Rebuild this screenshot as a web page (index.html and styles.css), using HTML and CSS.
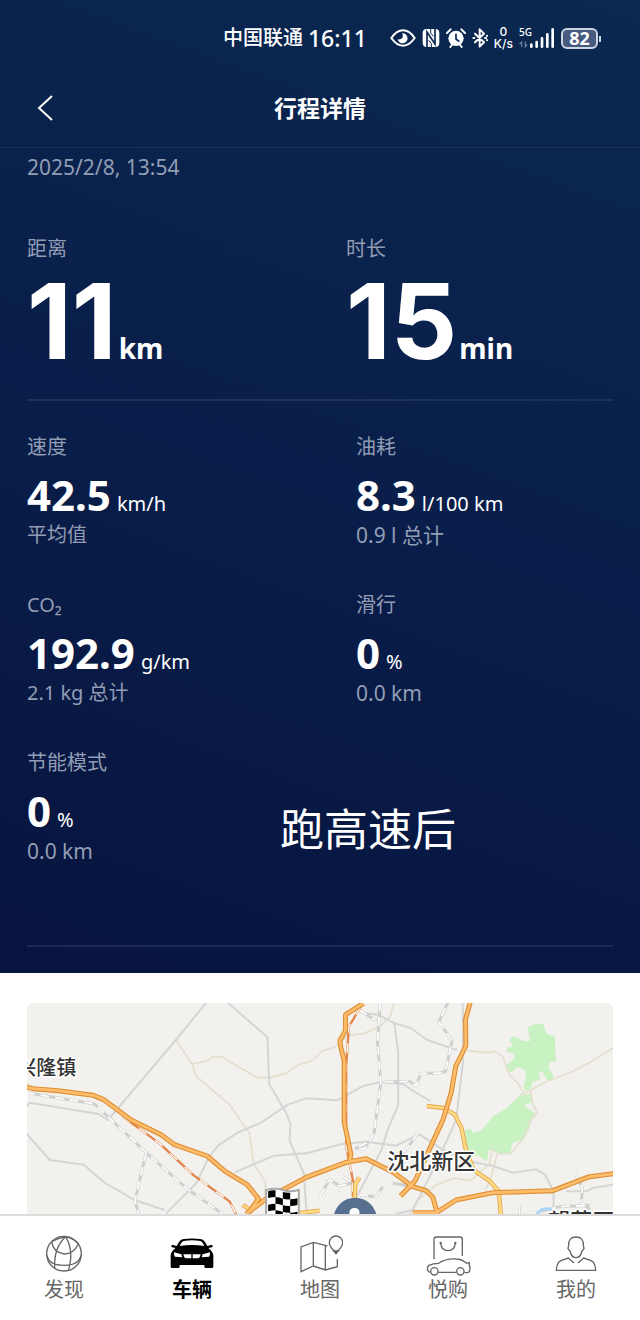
FILE: index.html
```html
<!DOCTYPE html>
<html lang="zh-CN">

<head>
    <meta charset="UTF-8">
    <meta name="viewport" content="width=device-width, initial-scale=1.0">
    <title>行程详情</title>
    <link rel="stylesheet" href="styles.css">
</head>

<body>
    <div class="hero">
        <div class="status-bar">
            <span class="carrier">中国联通</span>
            <span class="clock">16:11</span>
            <div class="status-icons">
                <svg width="26" height="20" viewBox="0 0 78 60" fill="none" stroke="#fff" stroke-width="6">
                    <path d="M4 30Q20 7 39 7T74 30Q58 53 39 53T4 30Z" />
                    <path d="M36 16a15 15 0 1 1-13 18q12 2 15-6 2-7-2-12z" fill="#fff" stroke="none" />
                </svg>
                <svg width="18" height="20" viewBox="0 0 54 60">
                    <rect x="2" y="3" width="50" height="54" rx="12" fill="#fff" />
                    <path d="M15 57V12l24 36V3" fill="none" stroke="#0a2650" stroke-width="5" />
                    <path d="M26 3v12l8 10M28 57V47l-8-10" fill="none" stroke="#0a2650" stroke-width="3" />
                </svg>
                <svg width="20" height="20" viewBox="0 0 60 60">
                    <circle cx="30" cy="31" r="23" fill="#fff" />
                    <path d="M3 15L14 4M57 15L46 4M13 57l7-9M47 57l-7-9" stroke="#fff" stroke-width="6" stroke-linecap="round" />
                    <path d="M30 17v16l10 8" fill="none" stroke="#0a2650" stroke-width="5" />
                </svg>
                <svg width="16" height="20" viewBox="0 0 48 60" fill="none" stroke="#fff" stroke-width="6" stroke-linecap="round" stroke-linejoin="round">
                    <path d="M9 17l27 26-13 13V4l13 13L9 43" />
                    <path d="M4 30h3M39 30h3M45 23v1M45 36v1" />
                </svg>
                <div class="net-speed"><span>0</span><span>K/s</span></div>
                <div class="signal">
                    <span>5G</span>
                    <svg width="36" height="22" viewBox="0 0 108 66" fill="none" stroke="#fff" stroke-width="8" stroke-linecap="round">
                        <path d="M37 59v-6M53 59V45M69 59V34M85 59V22M101 59V7" />
                        <path d="M8 59V45l-5 5M19 45v14l5-5" stroke-width="4" opacity=".4" />
                    </svg>
                </div>
                <div class="battery">82</div>
            </div>
        </div>

        <header class="title-bar">
            <button class="back" aria-label="返回">
                <svg width="18" height="28" viewBox="0 0 18 28" fill="none" stroke="#fff" stroke-width="2">
                    <path d="M16 2L3 14l13 12" />
                </svg>
            </button>
            <h1>行程详情</h1>
        </header>

        <main class="trip">
            <p class="date">2025/2/8, 13:54</p>

            <section class="summary">
                <div>
                    <p class="label">距离</p>
                    <p class="big">11<span>km</span></p>
                </div>
                <div>
                    <p class="label">时长</p>
                    <p class="big">15<span>min</span></p>
                </div>
            </section>

            <section class="stats">
                <div>
                    <p class="label">速度</p>
                    <p class="value">42.5<span>km/h</span></p>
                    <p class="label">平均值</p>
                </div>
                <div>
                    <p class="label">油耗</p>
                    <p class="value">8.3<span>l/100 km</span></p>
                    <p class="total">0.9 l 总计</p>
                </div>
                <div>
                    <p class="label">CO₂</p>
                    <p class="value">192.9<span>g/km</span></p>
                    <p class="label">2.1 kg 总计</p>
                </div>
                <div>
                    <p class="label">滑行</p>
                    <p class="value">0<span>%</span></p>
                    <p class="total">0.0 km</p>
                </div>
                <div>
                    <p class="label">节能模式</p>
                    <p class="value">0<span>%</span></p>
                    <p class="total">0.0 km</p>
                </div>
                <p class="note">跑高速后</p>
            </section>
        </main>
    </div>

    <section class="map-area">
        <svg class="map" viewBox="81 39 1761 633" preserveAspectRatio="xMidYMin slice" fill="none" stroke-linejoin="round">
            <!-- parks -->
            <g transform="translate(930 0)" fill="#c9f2c2">
                <path d="M655 112l24-11 22 2 10 28 26 8v45l3 30-18 3-6 15 17 28-6 12-15-2-14-26-9 2 2 24-22 6-7 22-14 4-6-11 8-32-4-19-22-10-16 16-17-2 2-20 22-20-2-14-21-4 1-13 18-3-10-19 7-12 19 5 15 9h20z" />
                <path d="M466 420l18-4 6 12 24-6 38-44 42-26 38-36 30-5 7 12-2 14-24 8 36 28-12 12-8 32-18 32-32 10-7 31-30 2-34-12-6 34-28-18-22 6-18-40z" />
            </g>
            <!-- minor roads -->
            <g stroke="#e3dfcf" stroke-width="5">
                <path d="M529 150l50 74 10 34 101 86 60 86 12 90 36 56-2 40M579 222l43-9 18-13 27 0 50 30 56 33h40l45-13 40-26 40-12 32-30 34-10 40-34 50-8 46-20 32-30 10-40" />
                <path d="M1404 182l56 6 27-4 23 16 20 54 24 24 25 42M1561 315l34-14 40-24 80-30 60-32 70-44M1592 300l8 42 14 26-22 26-20 50-38 46-32 2-24-16-8 44-56 52-50-8-56 22-54 44-30 56-40 20M1494 490l-22 80-16 34" />
            </g>
            <!-- country roads -->
            <g stroke="#d5d5d5" stroke-width="6">
                <path d="M620 38L529 150 325 390l-28-18-206-34-12 14M80 430l71 80 102 14 62 54 90 52 90 30M685 38l119 104 5 140 50 85 14 35-3 50 43 98 8 118M500 670l90-90 38-78 28-35 60-40 70-30 80-54 55-18 92 6 80-44 50-10 70 6 28 20 52 30" />
                <path d="M705 547l119-50 100-8 100-26 76-8 90 12 70-34 70 46 60 26M1100 70l36 4 49 26 48 14 50 36 90 30M1184 96l12 90v160l-32 74-18 60-80 150M1390 40v180l-20 170-60 130-70 140-50 12M1420 516l60 12 60 20 70-10 26 15 26 50v54M1700 604h60l20-10 62-10" />
            </g>
            <!-- railways -->
            <g stroke="#cfcfcf" stroke-width="9">
                <path d="M80 308l205 34 155 146 120 106 120 86M440 488l-34 145 12 40M1142 38l-8 120 10 120-20 150-30 50-24-4 40-20M1080 60l50 32M1156 276l74-2 20 14 14-38h50l24-6 20-92-40-56 28-60M1255 430l-50 70M962 618l28-50 30 20 40-10M1030 560l30 20M1080 614l50 6 20-30M1180 580l50 8M1725 545l24 50-4 44 28 20M1560 645v26M1600 670l80-20 90-4" />
            </g>
            <g stroke="#fff" stroke-width="5" stroke-dasharray="26 18">
                <path d="M80 308l205 34 155 146 120 106 120 86M440 488l-34 145 12 40M1142 38l-8 120 10 120-20 150-30 50-24-4 40-20M1080 60l50 32M1156 276l74-2 20 14 14-38h50l24-6 20-92-40-56 28-60M1255 430l-50 70M962 618l28-50 30 20 40-10M1030 560l30 20M1080 614l50 6 20-30M1725 545l24 50-4 44 28 20M1560 645v26M1600 670l80-20 90-4" />
            </g>
            <g stroke="#e3854a" stroke-width="7">
                <path d="M370 380l110 80 100 94 110 80 20 40M1084 50l-36 60-8 120v240l20 100v50" />
            </g>
            <g stroke="#fff" stroke-width="4" stroke-dasharray="28 32">
                <path d="M370 380l110 80 100 94 110 80 20 40M1084 50l-36 60-8 120v240l20 100v50" />
            </g>
            <!-- highways -->
            <g stroke="#e6a04a" stroke-width="13">
                <path d="M1282 348l50 6 34 20 20 40 12 60 24 66 50 34 26 30 6 70M1080 562l-12 20-4 58M730 645l30 20M890 670l70-8" />
            </g>
            <g stroke="#ffdc82" stroke-width="8">
                <path d="M1282 348l50 6 34 20 20 40 12 60 24 66 50 34 26 30 6 70M1080 562l-12 20-4 58M730 645l30 20M890 670l70-8" />
            </g>
            <g stroke="#de8f35" stroke-width="15">
                <path d="M78 290l22 6 76 6 105 14 30 12 84 62 90 44 40 30 98 34 54 46 66 40 34 42-27 38M740 672l60-46 120-64 120-45 60-11 80 40 60 44 40 12 20 20 14 50M1092 40l-54 34v48l-17 30 3 20 10 40v184l20 96-4 26M1412 38l-14 50 1 80-30 60-14 80-24 80-34 74-50 110-44 46M1240 668h70l60-38 110-22 180-6 110-42 82-10" />
            </g>
            <g stroke="#ffbd6b" stroke-width="8">
                <path d="M78 290l22 6 76 6 105 14 30 12 84 62 90 44 40 30 98 34 54 46 66 40 34 42-27 38M740 672l60-46 120-64 120-45 60-11 80 40 60 44 40 12 20 20 14 50M1092 40l-54 34v48l-17 30 3 20 10 40v184l20 96-4 26M1412 38l-14 50 1 80-30 60-14 80-24 80-34 74-50 110-44 46M1240 668h70l60-38 110-22 180-6 110-42 82-10" />
            </g>
            <path d="M1612 672l16-14 24-2 12 14M1690 664l30 2" stroke="#a9d6f5" stroke-width="9" />
            <g class="places">
                <text x="50" y="254">兴隆镇</text>
                <text class="district" x="1163" y="536">沈北新区</text>
                <text class="district" x="1646" y="717">望花区</text>
            </g>
            <!-- finish flag -->
            <path d="M800 680v-80q30-8 50 0t48 0v80z" fill="#fff" stroke="#aaa" stroke-width="6" />
            <path d="M806 604q11-4 22-3v20q-11 0-22 3zM850 606q11 3 22 2v20q-11 1-22-2zM828 621q11 0 22 5v20q-11-5-22-5zM872 628q11 0 22-3v20q-11 3-22 3zM806 644q11-3 22-3v20q-11 0-22 3zM850 646q11 3 22 2v20q-11 1-22-2zM828 661q11 0 22 5v14h-22zM872 668q11 0 22-3v16h-22z" fill="#000" />
            <!-- start pin -->
            <circle cx="1067" cy="688" r="65" fill="#587090" />
            <path d="M1050 680v-12q0-14 15-14t15 14v12z" fill="#fff" />
        </svg>
    </section>

    <nav class="tabs">
        <a href="#">
            <svg width="38" height="42" viewBox="0 0 114 126" fill="none" stroke="#666" stroke-width="4">
                <circle cx="57" cy="59" r="52" />
                <path d="M62 8Q26 40 29 102M62 8q26 44 8 102M20 23q4 32 38 37 28 0 42-30M62 8Q40 12 20 23M62 8q26 6 38 22M6 64q6 30 51 30 44 0 51-30" />
            </svg>
            发现
        </a>
        <a href="#" class="active">
            <svg width="46" height="42" viewBox="0 0 138 126">
                <path d="M23 36q9-18 17-20 29-5 58 0 8 2 17 20l14-4q5 5 0 8l-11 2q13 10 15 21v36q-1 3-4 3h-19q-4 0-4-4v-5H32v5q0 4-4 4H9q-4 0-4-3V63q2-12 15-21L9 40q-5-3 0-8zm9 0q37-6 74 0-6-14-12-15-25-4-50 0-6 1-12 15z" />
                <path d="M15 55l22 6 3 9-22-2q-4-5-3-13zM123 55l-22 6-3 9 22-2q4-5 3-13zM43 61h24v12H50q-6-2-7-12zM95 61H71v12h17q6-2 7-12z" fill="#fff" />
            </svg>
            车辆
        </a>
        <a href="#">
            <svg width="46" height="42" viewBox="0 0 138 126" fill="none" stroke="#666" stroke-width="4">
                <path d="M121 75v23l-36 10-36-12-37 17V39l37-14 36 9 6 2M49 25v71M85 34v74M117 58c-8-12-20-18-20-32a20 20 0 0 1 40 0c0 14-12 20-20 32z" />
                <path d="M104 46q13 6 26 0l-13 16z" fill="#666" stroke="none" />
            </svg>
            地图
        </a>
        <a href="#">
            <svg width="46" height="42" viewBox="0 0 138 126" fill="none" stroke="#666" stroke-width="4">
                <path d="M27 76V16q0-7 7-7h71q7 0 7 7v50M47 27q2 23 22 23t22-23M17 115q-7 0-9-6-2-6 2-14 14-7 31-7 20-15 53-13 15 0 31 13l8-2v8q4 8 0 19-4 4-15 2M40 115h54" />
                <circle cx="28" cy="112" r="11" />
                <circle cx="106" cy="112" r="11" />
                <path d="M44 27h6M88 27h6" stroke-width="8" />
            </svg>
            悦购
        </a>
        <a href="#">
            <svg width="42" height="42" viewBox="0 0 126 126" fill="none" stroke="#666" stroke-width="4">
                <path d="M63 9q23 0 22 25l2 10-6 7q-4 20-18 20T45 51l-6-7 2-10Q40 9 63 9zM57 87L40 72 18 80Q5 85 4 109h118q-1-24-14-29l-22-8-17 15" />
            </svg>
            我的
        </a>
    </nav>
</body>

</html>
```
FILE: styles.css
```css
* {
    box-sizing: border-box;
}

body {
    margin: 0;
    min-height: 100vh;
    display: flex;
    flex-direction: column;
    background-color: #fff;
    font-family: "Noto Sans", "Noto Sans CJK SC", sans-serif;
    font-size: 20px;
    line-height: 28px;
}

p,
h1 {
    margin: 0;
}

.hero {
    color: #fff;
    background: linear-gradient(200deg, #0a2850, #091e4a 50%, #07143f);
}

/* phone status bar */
.status-bar {
    display: flex;
    justify-content: flex-end;
    align-items: center;
    height: 76px;
    padding-right: 42px;
    font-weight: 500;
}

.clock {
    margin: 0 23px 0 5px;
    font-size: 23px;
}

.status-icons {
    display: flex;
    align-items: center;
    gap: 6px;
}

.net-speed {
    display: flex;
    flex-direction: column;
    align-items: center;
    font-family: Inter, sans-serif;
    font-size: 12px;
    line-height: 12px;
}

.signal {
    position: relative;
    display: flex;
}

.signal span {
    position: absolute;
    left: 0;
    top: 0;
    font-size: 10px;
    line-height: 10px;
}

.battery {
    position: relative;
    width: 37px;
    height: 21px;
    border: 2px solid #cdd5e0;
    border-radius: 6px;
    background-color: #475a80;
    font-size: 18px;
    font-weight: 700;
    line-height: 17px;
    text-align: center;
}

.battery::after {
    content: "";
    position: absolute;
    right: -5px;
    top: 6px;
    width: 2px;
    height: 6px;
    background-color: #cdd5e0;
}

.title-bar {
    display: grid;
    grid-template-columns: 90px 1fr 90px;
    align-items: center;
    height: 72px;
    padding-bottom: 8px;
    border-bottom: 1px solid #1b315a;
}

.title-bar h1 {
    font-size: 23px;
    font-weight: 700;
    text-align: center;
}

.back {
    display: flex;
    justify-content: center;
    padding: 0;
    border: none;
    background: none;
    cursor: pointer;
}

/* trip figures */
.trip {
    padding: 5px 27px 26px;
}

.date,
.label,
.total {
    color: #929db4;
}

.date,
.total {
    font-size: 21px;
}

.summary {
    display: grid;
    grid-template-columns: 1fr 1fr;
    column-gap: 52px;
    margin-top: 54px;
    padding-bottom: 26px;
    border-bottom: 2px solid #1e3059;
}

.big {
    display: flex;
    align-items: baseline;
    gap: 2px;
    margin-top: 6px;
    font-family: Inter, sans-serif;
    font-size: 104px;
    font-weight: 700;
    line-height: 104px;
}

.big span {
    font-family: "Noto Sans", sans-serif;
    font-size: 28px;
    line-height: 28px;
}

.stats {
    position: relative;
    display: grid;
    grid-template-columns: 1fr 1fr;
    gap: 42px 72px;
    padding: 32px 0 80px;
    border-bottom: 2px solid #1c2a54;
}

.value {
    display: flex;
    align-items: baseline;
    gap: 6px;
    margin-top: 8px;
    font-size: 42px;
    font-weight: 700;
    line-height: 52px;
}

.value span {
    font-size: 20px;
    font-weight: 400;
    line-height: 28px;
}

/* caption written over the figures */
.note {
    position: absolute;
    left: 253px;
    bottom: 84px;
    font-size: 44px;
    line-height: 64px;
}

.map-area {
    flex: 1;
    padding: 30px 27px 0;
}

.map {
    display: block;
    width: 100%;
    height: 211px;
    border-radius: 6px 6px 0 0;
    background-color: #f2f1ed;
}

.places text {
    fill: #333;
    stroke: #fff;
    stroke-width: 9px;
    paint-order: stroke;
    font-size: 60px;
    font-weight: 500;
}

.places .district {
    font-size: 66px;
}

/* bottom tabs */
.tabs {
    position: sticky;
    bottom: 0;
    display: grid;
    grid-template-columns: repeat(5, 1fr);
    height: 106px;
    padding-top: 18px;
    border-top: 2px solid #dcdcdc;
    background-color: #fff;
}

.tabs a {
    display: flex;
    flex-direction: column;
    align-items: center;
    color: #666;
    text-decoration: none;
}

.tabs .active {
    color: #000;
    font-weight: 700;
}
```
